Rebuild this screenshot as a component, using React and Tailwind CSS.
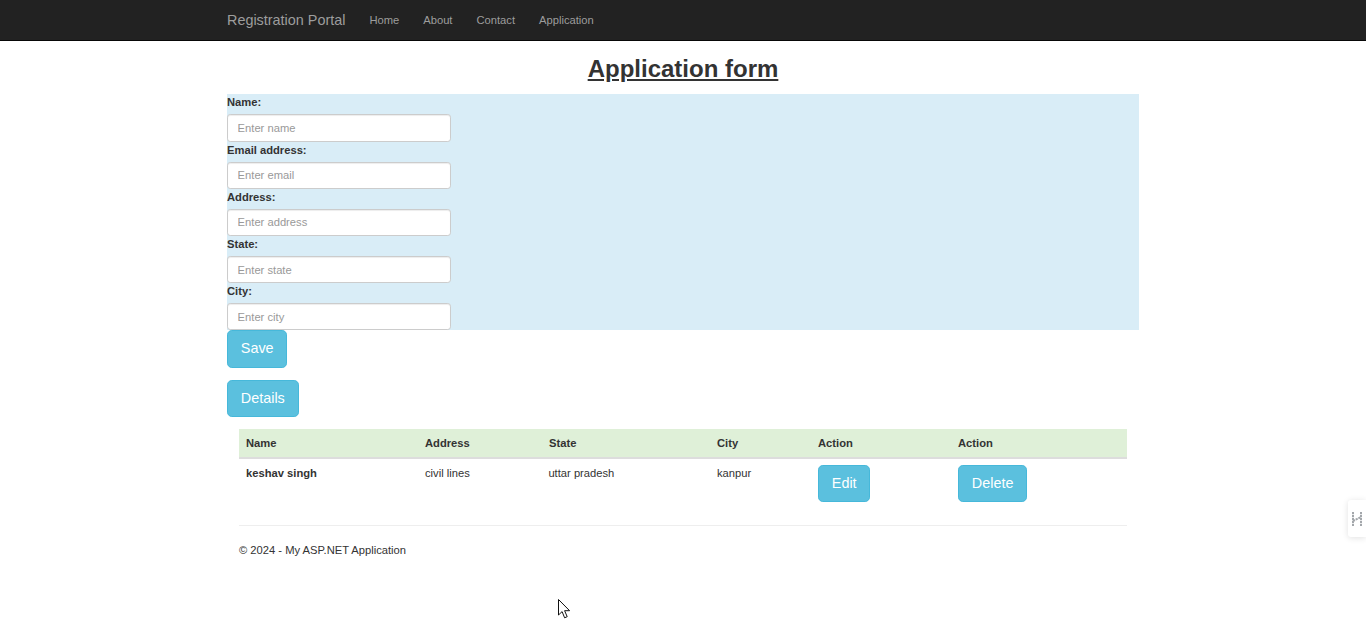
const navLinks = ["Home", "About", "Contact", "Application"];

const fields = [
    { label: "Name:", placeholder: "Enter name" },
    { label: "Email address:", placeholder: "Enter email" },
    { label: "Address:", placeholder: "Enter address" },
    { label: "State:", placeholder: "Enter state" },
    { label: "City:", placeholder: "Enter city" },
];

const Button = ({ children }) => (
    <button
        type="button"
        className="block bg-[#5bc0de] border border-[#46b8da] text-white text-[14.4px] leading-[19.2px] px-[12.8px] py-[8px] rounded-[4.8px] h-[37.4px]"
    >
        {children}
    </button>
);

const App = () => {
    return (
        <div className="min-h-[641px] bg-white text-[#333] text-[11.2px] leading-[16px] font-['Liberation_Sans',Arial,sans-serif] relative overflow-hidden">
            {/* Navbar */}
            <nav className="h-[41px] bg-[#222] border-b border-[#080808]">
                <div className="w-[912px] mx-auto flex items-center h-[40px] text-[#9d9d9d]">
                    <a className="text-[14.4px] leading-[20px] mr-[12px]">Registration Portal</a>
                    {navLinks.map((link) => (
                        <a key={link} className="px-[12px]">
                            {link}
                        </a>
                    ))}
                </div>
            </nav>

            <div className="w-[912px] mx-auto">
                <h1 className="text-[24px] leading-[26.4px] font-bold underline text-center mt-[15.4px] mb-[11.6px]">
                    Application form
                </h1>

                {/* Form */}
                <div className="bg-[#d9edf7]">
                    {fields.map((field) => (
                        <div key={field.label}>
                            <label className="block font-bold mb-[4px]">{field.label}</label>
                            <input
                                type="text"
                                placeholder={field.placeholder}
                                className="block w-[224px] h-[27.2px] bg-white border border-[#ccc] rounded-[3.2px] px-[9.6px] text-[11.2px] placeholder:text-[#999] shadow-[inset_0_1px_1px_rgba(0,0,0,0.075)]"
                            />
                        </div>
                    ))}
                </div>

                <Button>Save</Button>
                <div className="mt-[12px]">
                    <Button>Details</Button>
                </div>

                {/* Table */}
                <div className="mx-[12px] mt-[12px]">
                    <table className="w-full table-fixed border-collapse">
                        <thead>
                            <tr className="bg-[#dff0d8] border-b-[2px] border-[#ddd] text-left">
                                <th className="w-[179px] h-[29px] px-[7px] font-bold">Name</th>
                                <th className="w-[124px] px-[7px] font-bold">Address</th>
                                <th className="w-[168px] px-[7px] font-bold">State</th>
                                <th className="w-[101px] px-[7px] font-bold">City</th>
                                <th className="w-[140px] px-[7px] font-bold">Action</th>
                                <th className="px-[7px] font-bold">Action</th>
                            </tr>
                        </thead>
                        <tbody>
                            <tr className="align-top">
                                <td className="px-[7px] pt-[5.4px] font-bold">keshav singh</td>
                                <td className="px-[7px] pt-[5.4px]">civil lines</td>
                                <td className="px-[6.4px] pt-[5.4px]">uttar pradesh</td>
                                <td className="px-[7px] pt-[5.4px]">kanpur</td>
                                <td className="px-[7px] pt-[5.4px] pb-[7.4px]">
                                    <Button>Edit</Button>
                                </td>
                                <td className="px-[7px] pt-[5.4px] pb-[7.4px]">
                                    <Button>Delete</Button>
                                </td>
                            </tr>
                        </tbody>
                    </table>

                    <hr className="border-0 border-t border-[#eee] mt-[16px] mb-[16px]" />
                    <footer>
                        <p>© 2024 - My ASP.NET Application</p>
                    </footer>
                </div>
            </div>

            {/* Side widget tab */}
            <div className="absolute right-0 top-[500px] w-[18px] h-[37px] bg-white rounded-l-[3px] shadow-[0_1px_6px_rgba(0,0,0,0.12)] flex items-center justify-center">
                <svg width="12" height="14" viewBox="0 0 12 14" fill="none" stroke="#a3a7ab" strokeWidth="2">
                    <path d="M2 0v14M10 0v14M2 9l8-4" strokeDasharray="2.2 0.8" />
                </svg>
            </div>

            {/* Mouse cursor */}
            <svg className="absolute left-[558px] top-[599px]" width="13" height="20" viewBox="0 0 13 20">
                <path
                    d="M0.5 0.5v15.5l3.6-3.4 2.5 6.2 2.6-1.1-2.6-6h5z"
                    fill="white"
                    stroke="#111"
                    strokeWidth="1"
                    strokeLinejoin="miter"
                />
            </svg>
        </div>
    );
};

export default App;
